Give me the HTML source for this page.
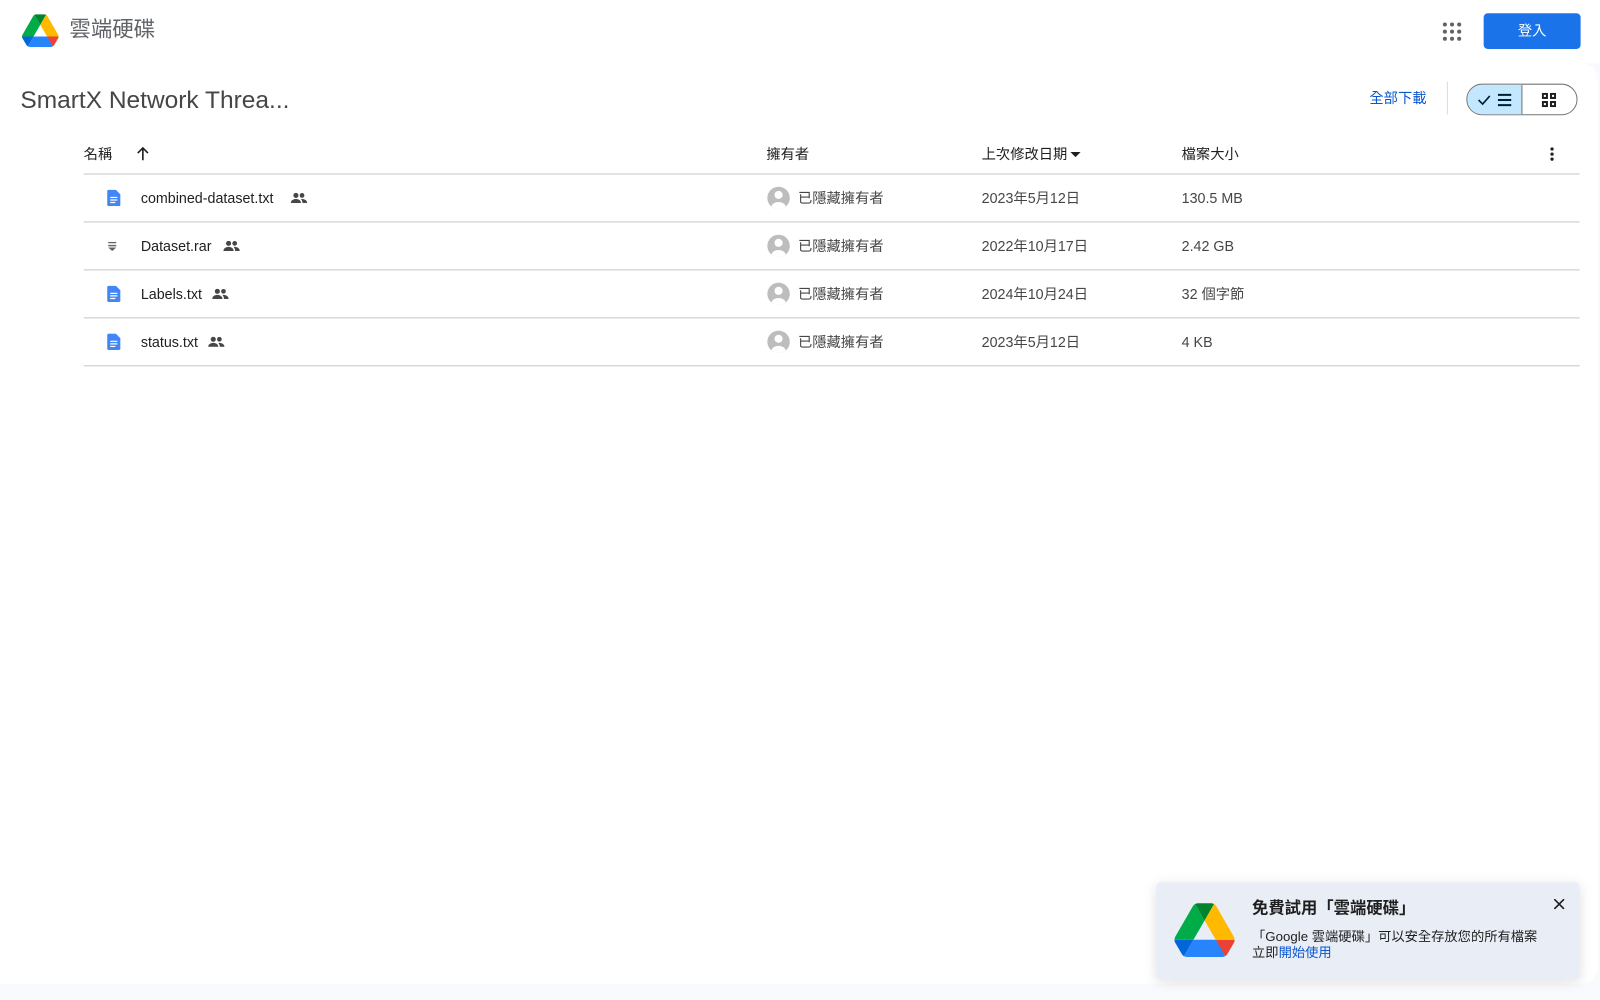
<!DOCTYPE html>
<html><head><meta charset="utf-8"><style>
*{margin:0;padding:0;box-sizing:border-box}
html,body{width:1600px;height:1000px;overflow:hidden}
body{background:#f8fafd;font-family:"Liberation Sans","Noto Sans CJK TC",sans-serif;color:#1f1f1f;position:relative}
#w{position:absolute;left:0;top:0;width:1568px;height:980px;transform:scale(1.0204);transform-origin:0 0}
.hdr{position:absolute;left:0;top:0;width:1568px;height:62px;background:#fff}
.card{position:absolute;left:0;top:62px;width:1566px;height:902px;background:#fff;border-radius:0 16px 16px 0}
.abs{position:absolute}
.row{position:absolute;left:82px;width:1466px;height:47px;border-bottom:1px solid #c4c7c5;font-size:14px}
.row span{position:absolute;top:15px;line-height:17px;white-space:nowrap}
.av{position:absolute;left:670px;top:12px;width:22px;height:22px;border-radius:50%;background:#bdbdbd;overflow:hidden}
</style></head><body><div id="w">
<div class="hdr"></div>
<svg class="abs" style="left:21px;top:14px" width="37" height="32" viewBox="0 0 87.3 78"><path d="m6.6 66.85 3.85 6.65c.8 1.4 1.95 2.5 3.3 3.3l13.75-23.8h-27.5c0 1.55.4 3.1 1.2 4.5z" fill="#0066da"/><path d="m43.65 25-13.75-23.8c-1.35.8-2.5 1.9-3.3 3.3l-25.4 44a9.06 9.06 0 0 0-1.2 4.5h27.5z" fill="#00ac47"/><path d="m73.55 76.8c1.35-.8 2.5-1.9 3.3-3.3l1.6-2.75 7.65-13.25c.8-1.4 1.2-2.95 1.2-4.5h-27.502l5.852 11.5z" fill="#ea4335"/><path d="m43.65 25 13.75-23.8c-1.35-.8-2.9-1.2-4.5-1.2h-18.5c-1.6 0-3.15.45-4.5 1.2z" fill="#00832d"/><path d="m59.8 53h-32.3l-13.75 23.8c1.35.8 2.9 1.2 4.5 1.2h50.8c1.6 0 3.15-.45 4.5-1.2z" fill="#2684fc"/><path d="m73.4 26.5-12.7-22c-.8-1.4-1.95-2.5-3.3-3.3l-13.75 23.8 16.15 28h27.45c0-1.55-.4-3.1-1.2-4.5z" fill="#ffba00"/></svg>
<div class="abs" style="left:68px;top:16px;font-size:21px;line-height:28px;color:#5f6368">雲端硬碟</div>
<svg class="abs" style="left:1413px;top:21px" width="20" height="20" viewBox="0 0 20 20" fill="#5f6368"><circle cx="3" cy="3" r="2"/><circle cx="10" cy="3" r="2"/><circle cx="17" cy="3" r="2"/><circle cx="3" cy="10" r="2"/><circle cx="10" cy="10" r="2"/><circle cx="17" cy="10" r="2"/><circle cx="3" cy="17" r="2"/><circle cx="10" cy="17" r="2"/><circle cx="17" cy="17" r="2"/></svg>
<div class="abs" style="left:1454px;top:13px;width:95px;height:35px;background:#1a73e8;border-radius:4px;color:#fff;font-size:14px;text-align:center;line-height:35px">登入</div>
<div class="card"></div>
<div class="abs" style="left:20px;top:84px;font-size:24px;line-height:30px;color:#444746">SmartX Network Threa...</div>
<div class="abs" style="left:1342px;top:87px;font-size:14px;line-height:18px;color:#0b57d0">全部下載</div>
<div class="abs" style="left:1418px;top:80px;width:1px;height:32px;background:#dadce0"></div>
<div class="abs" style="left:1437px;top:82px;width:109px;height:31px;border:1px solid #747775;border-radius:16px;overflow:hidden">
<div style="position:absolute;left:0;top:0;width:54px;height:31px;background:#c2e7ff;border-right:1px solid #747775"></div>
<svg style="position:absolute;left:10px;top:8px" width="34" height="14" viewBox="0 0 34 14"><path d="M1 7l4 4 7-8" stroke="#001d35" stroke-width="1.6" fill="none"/><path d="M20 2h13M20 7h13M20 12h13" stroke="#001d35" stroke-width="2"/></svg>
<svg style="position:absolute;left:73px;top:8px" width="14" height="14" viewBox="0 0 14 14" fill="none" stroke="#1f1f1f" stroke-width="2"><rect x="1" y="1" width="4" height="4"/><rect x="9" y="1" width="4" height="4"/><rect x="1" y="9" width="4" height="4"/><rect x="9" y="9" width="4" height="4"/></svg>
</div>
<div class="row" style="top:124px;font-size:14px">
<span style="left:0;top:19px">名稱</span>
<svg style="position:absolute;left:52px;top:20px" width="12" height="14" viewBox="0 0 12 14"><path d="M6 13V2M1 6l5-5 5 5" stroke="#1f1f1f" stroke-width="1.6" fill="none"/></svg>
<span style="left:669px;top:19px">擁有者</span>
<span style="left:880px;top:19px">上次修改日期</span>
<svg style="position:absolute;left:967px;top:25px" width="10" height="5"><path d="M0 0h10L5 5z" fill="#1f1f1f"/></svg>
<span style="left:1076px;top:19px">檔案大小</span>
<svg style="position:absolute;left:1437px;top:20px" width="4" height="14" fill="#1f1f1f"><circle cx="2" cy="2" r="1.6"/><circle cx="2" cy="7" r="1.6"/><circle cx="2" cy="12" r="1.6"/></svg>
</div>
<div class="row" style="top:171px"><svg style="position:absolute;left:23px;top:15px" width="13" height="16" viewBox="0 0 13 16"><path d="M1.5 0h7L13 4.5V14.5c0 .8-.7 1.5-1.5 1.5h-10C.7 16 0 15.3 0 14.5V1.5C0 .7.7 0 1.5 0z" fill="#4285f4"/><path d="M3 7.5h7M3 10h7M3 12.5h5" stroke="#fff" stroke-width="1.2"/></svg><span style="left:56px">combined-dataset.txt</span><svg style="position:absolute;left:203px;top:18px" width="16" height="10" viewBox="0 0 16 10" fill="#444746"><circle cx="5" cy="2.5" r="2.5"/><circle cx="11" cy="2.5" r="2.3"/><path d="M0 10c0-3 3-4 5-4s5 1 5 4zM11 6c2 0 5 1 5 4h-4.5c0-2-1-3-1.5-4z"/></svg><div class="av"><svg width="22" height="22"><circle cx="11" cy="8" r="4" fill="#fff"/><ellipse cx="11" cy="20" rx="7" ry="5" fill="#fff"/></svg></div><span style="left:700px;color:#444746">已隱藏擁有者</span><span style="left:880px;color:#444746">2023年5月12日</span><span style="left:1076px;color:#444746">130.5 MB</span></div>
<div class="row" style="top:218px"><svg style="position:absolute;left:24px;top:19px" width="8" height="9" fill="#5f6368"><rect width="8" height="1.4"/><rect y="3" width="8" height="1.4"/><path d="M0 5.5h8L4 9z"/></svg><span style="left:56px">Dataset.rar</span><svg style="position:absolute;left:137px;top:18px" width="16" height="10" viewBox="0 0 16 10" fill="#444746"><circle cx="5" cy="2.5" r="2.5"/><circle cx="11" cy="2.5" r="2.3"/><path d="M0 10c0-3 3-4 5-4s5 1 5 4zM11 6c2 0 5 1 5 4h-4.5c0-2-1-3-1.5-4z"/></svg><div class="av"><svg width="22" height="22"><circle cx="11" cy="8" r="4" fill="#fff"/><ellipse cx="11" cy="20" rx="7" ry="5" fill="#fff"/></svg></div><span style="left:700px;color:#444746">已隱藏擁有者</span><span style="left:880px;color:#444746">2022年10月17日</span><span style="left:1076px;color:#444746">2.42 GB</span></div>
<div class="row" style="top:265px"><svg style="position:absolute;left:23px;top:15px" width="13" height="16" viewBox="0 0 13 16"><path d="M1.5 0h7L13 4.5V14.5c0 .8-.7 1.5-1.5 1.5h-10C.7 16 0 15.3 0 14.5V1.5C0 .7.7 0 1.5 0z" fill="#4285f4"/><path d="M3 7.5h7M3 10h7M3 12.5h5" stroke="#fff" stroke-width="1.2"/></svg><span style="left:56px">Labels.txt</span><svg style="position:absolute;left:126px;top:18px" width="16" height="10" viewBox="0 0 16 10" fill="#444746"><circle cx="5" cy="2.5" r="2.5"/><circle cx="11" cy="2.5" r="2.3"/><path d="M0 10c0-3 3-4 5-4s5 1 5 4zM11 6c2 0 5 1 5 4h-4.5c0-2-1-3-1.5-4z"/></svg><div class="av"><svg width="22" height="22"><circle cx="11" cy="8" r="4" fill="#fff"/><ellipse cx="11" cy="20" rx="7" ry="5" fill="#fff"/></svg></div><span style="left:700px;color:#444746">已隱藏擁有者</span><span style="left:880px;color:#444746">2024年10月24日</span><span style="left:1076px;color:#444746">32 個字節</span></div>
<div class="row" style="top:312px"><svg style="position:absolute;left:23px;top:15px" width="13" height="16" viewBox="0 0 13 16"><path d="M1.5 0h7L13 4.5V14.5c0 .8-.7 1.5-1.5 1.5h-10C.7 16 0 15.3 0 14.5V1.5C0 .7.7 0 1.5 0z" fill="#4285f4"/><path d="M3 7.5h7M3 10h7M3 12.5h5" stroke="#fff" stroke-width="1.2"/></svg><span style="left:56px">status.txt</span><svg style="position:absolute;left:122px;top:18px" width="16" height="10" viewBox="0 0 16 10" fill="#444746"><circle cx="5" cy="2.5" r="2.5"/><circle cx="11" cy="2.5" r="2.3"/><path d="M0 10c0-3 3-4 5-4s5 1 5 4zM11 6c2 0 5 1 5 4h-4.5c0-2-1-3-1.5-4z"/></svg><div class="av"><svg width="22" height="22"><circle cx="11" cy="8" r="4" fill="#fff"/><ellipse cx="11" cy="20" rx="7" ry="5" fill="#fff"/></svg></div><span style="left:700px;color:#444746">已隱藏擁有者</span><span style="left:880px;color:#444746">2023年5月12日</span><span style="left:1076px;color:#444746">4 KB</span></div>
<div class="abs" style="left:1133px;top:865px;width:415px;height:95px;background:#e9edf6;border-radius:4px;box-shadow:0 2px 12px rgba(0,0,0,.12)">
<svg style="position:absolute;left:18px;top:20px" width="59" height="53" viewBox="0 0 87.3 78"><path d="m6.6 66.85 3.85 6.65c.8 1.4 1.95 2.5 3.3 3.3l13.75-23.8h-27.5c0 1.55.4 3.1 1.2 4.5z" fill="#0066da"/><path d="m43.65 25-13.75-23.8c-1.35.8-2.5 1.9-3.3 3.3l-25.4 44a9.06 9.06 0 0 0-1.2 4.5h27.5z" fill="#00ac47"/><path d="m73.55 76.8c1.35-.8 2.5-1.9 3.3-3.3l1.6-2.75 7.65-13.25c.8-1.4 1.2-2.95 1.2-4.5h-27.502l5.852 11.5z" fill="#ea4335"/><path d="m43.65 25 13.75-23.8c-1.35-.8-2.9-1.2-4.5-1.2h-18.5c-1.6 0-3.15.45-4.5 1.2z" fill="#00832d"/><path d="m59.8 53h-32.3l-13.75 23.8c1.35.8 2.9 1.2 4.5 1.2h50.8c1.6 0 3.15-.45 4.5-1.2z" fill="#2684fc"/><path d="m73.4 26.5-12.7-22c-.8-1.4-1.95-2.5-3.3-3.3l-13.75 23.8 16.15 28h27.45c0-1.55-.4-3.1-1.2-4.5z" fill="#ffba00"/></svg>
<div style="position:absolute;left:94px;top:16px;font-size:16px;line-height:20px;font-weight:bold;color:#1f1f1f">免費試用「雲端硬碟」</div>
<div style="position:absolute;left:94px;top:45px;font-size:13px;line-height:16px;color:#1f1f1f">「Google 雲端硬碟」可以安全存放您的所有檔案<br>立即<span style="color:#0b57d0">開始使用</span></div>
<svg style="position:absolute;left:390px;top:16px" width="10" height="10"><path d="M0 0l10 10M10 0L0 10" stroke="#1f1f1f" stroke-width="1.6"/></svg>
</div>
</div></body></html>
